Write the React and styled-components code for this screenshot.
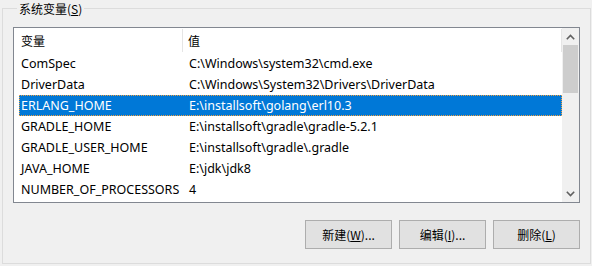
import React from "react";
import styled, { createGlobalStyle } from "styled-components";

const Global = createGlobalStyle`
  html, body { margin: 0; padding: 0; background: #f0f0f0; }
  body { font-family: "Noto Sans", "Noto Sans CJK SC", sans-serif; font-size: 12.5px; color: #000; }
`;

const Page = styled.div`
  width: 592px;
  height: 266px;
  box-sizing: border-box;
  padding: 0 1px 2px 2px;
  background: #f0f0f0;
`;

const Group = styled.fieldset`
  margin: 0;
  height: 100%;
  box-sizing: border-box;
  border: 1px solid #dcdcdc;
  padding: 10px 10px 0 10px;
  display: flex;
  flex-direction: column;
  align-items: stretch;
`;

const Legend = styled.legend`
  padding: 0 2px 0 2px;
  margin-left: 4px;
  font-family: "Noto Sans CJK SC", sans-serif;
  font-size: 12px;
  line-height: 17px;
  color: #000;
`;

const ListBox = styled.div`
  width: 567px;
  height: 176px;
  box-sizing: border-box;
  border: 1px solid #828790;
  background: #fff;
  display: flex;
  overflow: hidden;
`;

const ListBody = styled.div`
  flex: 1;
  display: flex;
  flex-direction: column;
`;

const Header = styled.div`
  display: grid;
  grid-template-columns: 169px 1fr;
  height: 25px;
  align-items: stretch;
`;

const HeaderCell = styled.div`
  display: flex;
  align-items: center;
  padding-left: ${(p) => p.$pad}px;
  font-family: "Noto Sans CJK SC", sans-serif;
  font-size: 12px;
  border-right: 1px solid #e5e5e5;
  margin: 1px 0 1px 0;
`;

const Row = styled.div`
  display: grid;
  grid-template-columns: 164px 1fr;
  height: 21px;
  margin-left: 5px;
  box-sizing: border-box;
  align-items: center;
  background: ${(p) => (p.$selected ? "#0078d7" : "transparent")};
  color: ${(p) => (p.$selected ? "#fff" : "#000")};
  outline: ${(p) => (p.$selected ? "1px dotted #f0a040" : "none")};
  outline-offset: -1px;
`;

const Cell = styled.div`
  padding-left: ${(p) => p.$pad}px;
  white-space: nowrap;
  overflow: hidden;
  line-height: 22px;
`;

const ScrollBar = styled.div`
  width: 17px;
  background: #f0f0f0;
  display: flex;
  flex-direction: column;
`;

const ArrowBtn = styled.div`
  height: 17px;
  display: flex;
  align-items: center;
  justify-content: center;
`;

const Track = styled.div`
  flex: 1;
  display: flex;
  flex-direction: column;
  padding: 0 1px;
`;

const Thumb = styled.div`
  height: 48px;
  background: #cdcdcd;
`;

const Buttons = styled.div`
  display: flex;
  justify-content: flex-end;
  gap: 7px;
  width: 567px;
  margin-top: 17px;
`;

const Button = styled.button`
  width: 87px;
  height: 29px;
  box-sizing: border-box;
  border: 1px solid #adadad;
  background: #e1e1e1;
  font-family: "Noto Sans CJK SC", sans-serif;
  font-size: 12px;
  color: #000;
  padding: 0;
  line-height: 1;
`;

const U = styled.span`
  text-decoration: underline;
`;

const rows = [
  ["ComSpec", "C:\\Windows\\system32\\cmd.exe"],
  ["DriverData", "C:\\Windows\\System32\\Drivers\\DriverData"],
  ["ERLANG_HOME", "E:\\installsoft\\golang\\erl10.3"],
  ["GRADLE_HOME", "E:\\installsoft\\gradle\\gradle-5.2.1"],
  ["GRADLE_USER_HOME", "E:\\installsoft\\gradle\\.gradle"],
  ["JAVA_HOME", "E:\\jdk\\jdk8"],
  ["NUMBER_OF_PROCESSORS", "4"],
];

const Chevron = ({ up }) => (
  <svg width="9" height="6" viewBox="0 0 9 6">
    <path
      d={up ? "M0.8 5.2 L4.5 1.5 L8.2 5.2" : "M0.8 0.8 L4.5 4.5 L8.2 0.8"}
      fill="none"
      stroke="#606060"
      strokeWidth="1.6"
    />
  </svg>
);

export default function App() {
  return (
    <>
      <Global />
      <Page>
        <Group>
          <Legend>
            系统变量(<U>S</U>)
          </Legend>
          <ListBox>
            <ListBody>
              <Header>
                <HeaderCell $pad={7}>变量</HeaderCell>
                <HeaderCell $pad={5}>值</HeaderCell>
              </Header>
              {rows.map(([k, v]) => (
                <Row key={k} $selected={k === "ERLANG_HOME"}>
                  <Cell $pad={2}>{k}</Cell>
                  <Cell $pad={6}>{v}</Cell>
                </Row>
              ))}
            </ListBody>
            <ScrollBar>
              <ArrowBtn>
                <Chevron up />
              </ArrowBtn>
              <Track>
                <Thumb />
              </Track>
              <ArrowBtn>
                <Chevron />
              </ArrowBtn>
            </ScrollBar>
          </ListBox>
          <Buttons>
            <Button>
              新建(<U>W</U>)...
            </Button>
            <Button>
              编辑(<U>I</U>)...
            </Button>
            <Button>
              删除(<U>L</U>)
            </Button>
          </Buttons>
        </Group>
      </Page>
    </>
  );
}
